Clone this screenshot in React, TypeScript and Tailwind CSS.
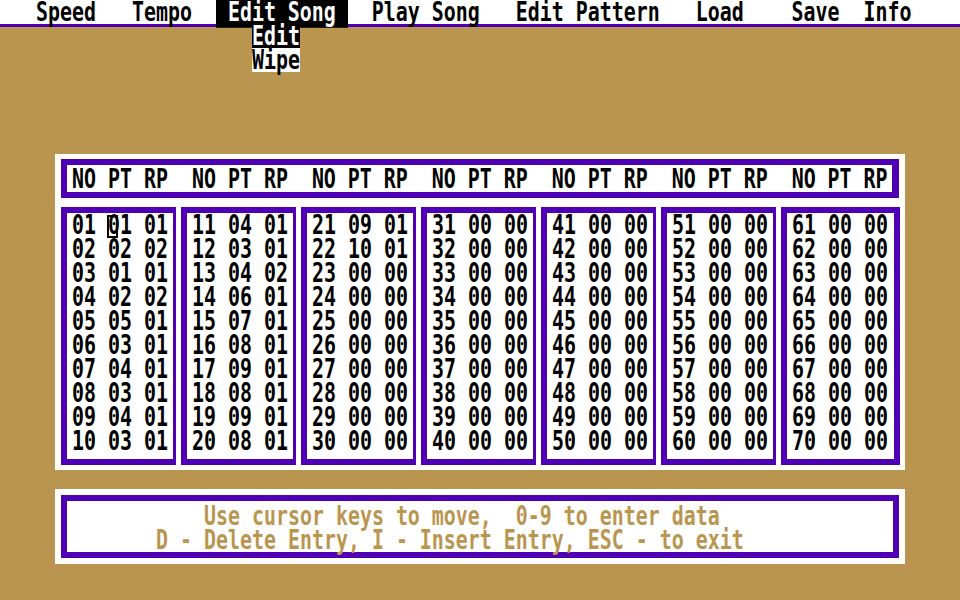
import type { ReactNode } from 'react'

const PURPLE = 'border-[#5000b4]'

function Line({ children, className = '' }: { children: ReactNode; className?: string }) {
  return (
    <div className={`h-6 flex items-center whitespace-pre ${className}`}>
      <span className="inline-block leading-4 scale-y-[1.3] translate-y-[1.5px]">{children}</span>
    </div>
  )
}

const pad = (n: number) => String(n).padStart(2, '0')

const songData: [number, number][] = [
  [1, 1], [2, 2], [1, 1], [2, 2], [5, 1], [3, 1], [4, 1], [3, 1], [4, 1], [3, 1],
  [4, 1], [3, 1], [4, 2], [6, 1], [7, 1], [8, 1], [9, 1], [8, 1], [9, 1], [8, 1],
  [9, 1], [10, 1],
]

function entry(no: number) {
  const d = songData[no - 1] ?? [0, 0]
  return `${pad(no)} ${pad(d[0])} ${pad(d[1])}`
}

export default function App() {
  const columns = Array.from({ length: 7 }, (_, c) =>
    Array.from({ length: 10 }, (_, r) => c * 10 + r + 1)
  )

  return (
    <div className="relative w-[960px] h-[600px] overflow-hidden bg-[#ba9550] font-['DejaVu_Sans_Mono',monospace] font-bold text-[19.93px] text-black">
      {/* Menu bar */}
      <div className="h-[27px] bg-white border-b-[3px] border-[#5000b4]">
        <Line>
          {'   Speed   Tempo  '}
          <span className="bg-black text-white">{' Edit Song '}</span>
          {'  Play Song   Edit Pattern   Load    Save  Info'}
        </Line>
      </div>

      {/* Edit Song dropdown */}
      <div className="absolute top-6 left-[252px] w-12">
        <Line className="bg-black text-white">Edit</Line>
        <Line className="bg-white text-black">Wipe</Line>
      </div>

      {/* Song table */}
      <div className="mt-[127px] ml-[55px] w-[850px] h-[316px] bg-white pl-[6px] pt-[5px]">
        <div className={`w-[838px] h-[39px] border-[6px] border-r-[7px] ${PURPLE} pl-[5px] pt-[2px]`}>
          <Line>{Array.from({ length: 7 }, () => 'NO PT RP').join('  ')}</Line>
        </div>

        <div className="flex gap-[5px] mt-[9px]">
          {columns.map((col, c) => (
            <div
              key={c}
              className={`h-[258px] border-[6px] ${PURPLE} pl-[5px] ${
                c === 6 ? 'w-[119px]' : 'w-[115px] border-r-[3px]'
              }`}
            >
              {col.map((no) => (
                <div key={no} className="relative">
                  <Line>{entry(no)}</Line>
                  {no === 1 && (
                    <div className="absolute left-[35px] top-[2px] w-[11px] h-[23px] border-2 border-black" />
                  )}
                </div>
              ))}
            </div>
          ))}
        </div>
      </div>

      {/* Help box */}
      <div className="mt-[19px] ml-[55px] w-[850px] h-[75px] bg-white pl-[6px] pt-[6px]">
        <div className={`w-[838px] h-[63px] border-[6px] ${PURPLE} pl-[89px] pt-[3px] text-[#ba9550]`}>
          <Line>{'    Use cursor keys to move,  0-9 to enter data'}</Line>
          <Line>{'D - Delete Entry, I - Insert Entry, ESC - to exit'}</Line>
        </div>
      </div>
    </div>
  )
}
